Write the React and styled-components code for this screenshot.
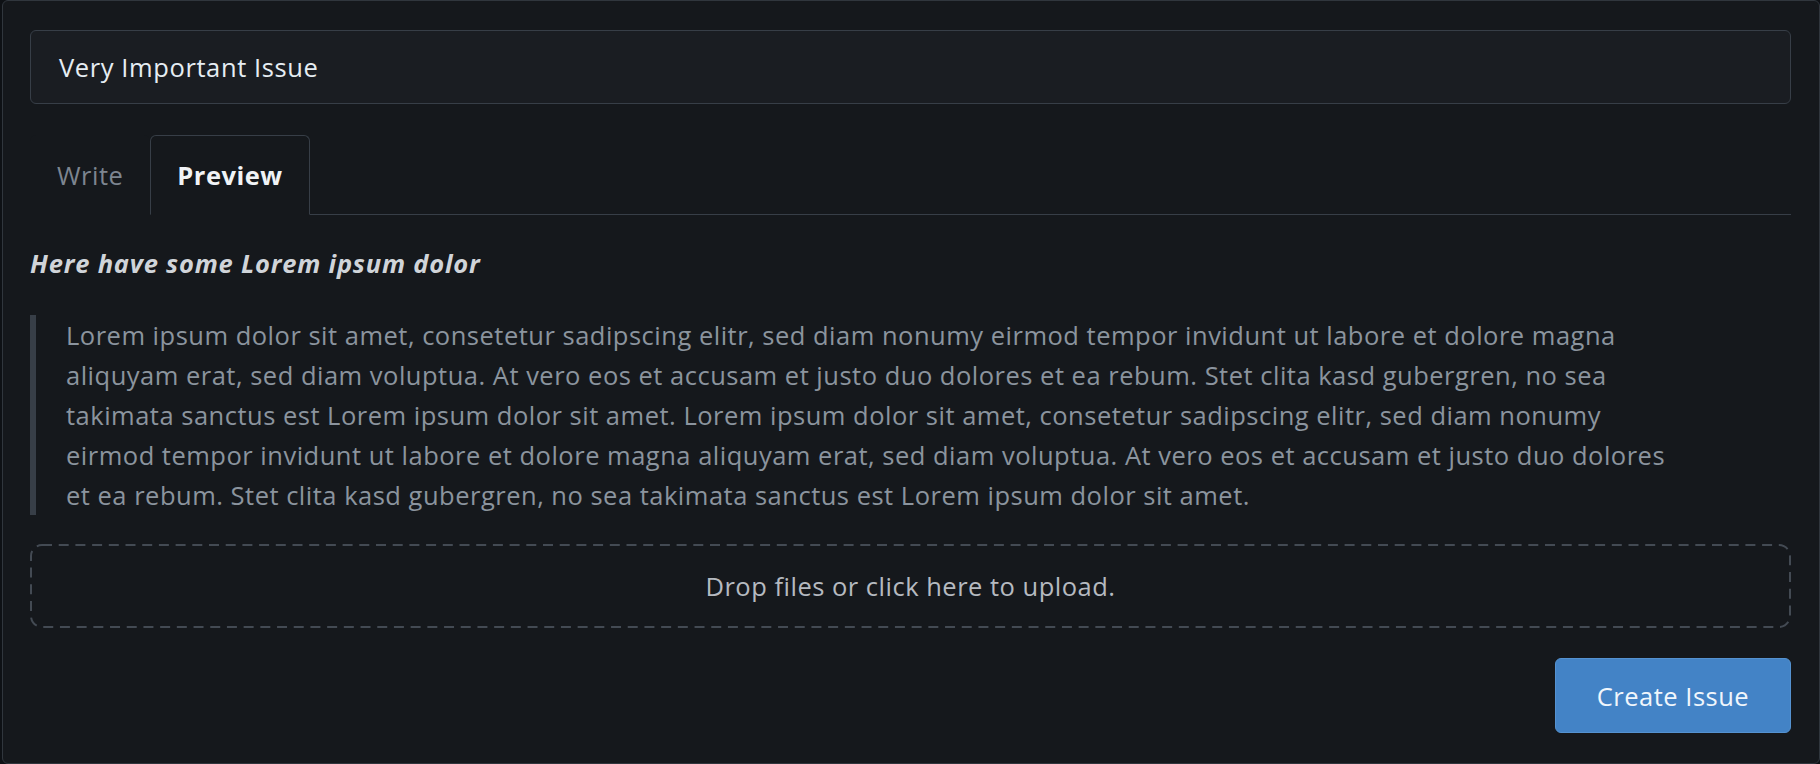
import styled, { createGlobalStyle } from "styled-components";

const Global = createGlobalStyle`
  html, body {
    margin: 0;
    padding: 0;
    background: #0e1115;
  }
  * { box-sizing: border-box; }
`;

const FONT = `"Open Sans", "Noto Sans", sans-serif`;

const Panel = styled.div`
  width: 1818px;
  height: 764px;
  margin-left: 2px;
  display: flex;
  flex-direction: column;
  background: #15181c;
  border: 1px solid #30363d;
  border-radius: 6px;
  padding: 29px 28px 0 27px;
  font-family: ${FONT};
  font-size: 25.5px;
  letter-spacing: 0.5px;
`;

const TitleInput = styled.div`
  height: 74px;
  display: flex;
  align-items: center;
  padding: 0 28px;
  background: #1a1d22;
  border: 1px solid #373e47;
  border-radius: 6px;
  color: #e6edf3;
  letter-spacing: 0.6px;
`;

const TabBar = styled.div`
  display: flex;
  margin-top: 31px;
  border-bottom: 1px solid #373e47;
`;

const Tab = styled.div`
  height: 80px;
  display: flex;
  align-items: center;
  padding: 0 26px;
  margin-bottom: -1px;
  color: ${(p) => (p.$active ? "#f0f3f6" : "#7d8590")};
  font-weight: ${(p) => (p.$active ? 700 : 400)};
  background: #15181c;
  border: 1px solid ${(p) => (p.$active ? "#373e47" : "transparent")};
  border-bottom-color: ${(p) => (p.$active ? "#15181c" : "transparent")};
  border-radius: 6px 6px 0 0;
`;

const Heading = styled.div`
  margin-top: 28px;
  line-height: 40px;
  font-size: 25.5px;
  font-weight: 700;
  font-style: italic;
  letter-spacing: 0.8px;
  color: #d0d4d9;
`;

const Quote = styled.blockquote`
  margin: 32px 0 0 0;
  padding: 0 0 0 30px;
  border-left: 6px solid #373e47;
`;

const QuoteText = styled.p`
  margin: 0;
  max-width: 1630px;
  line-height: 40px;
  color: #8b949e;
`;

const DropZone = styled.div`
  position: relative;
  height: 84px;
  margin-top: 29px;
  display: flex;
  align-items: center;
  justify-content: center;
  color: #b5bac0;
`;

const DashFrame = styled.svg`
  position: absolute;
  inset: 0;
  width: 100%;
  height: 100%;
  overflow: visible;
  pointer-events: none;
`;

const Footer = styled.div`
  display: flex;
  justify-content: flex-end;
  margin-top: 30px;
`;

const Button = styled.button`
  width: 236px;
  height: 75px;
  background: #4383c6;
  border: 1px solid #5592d0;
  border-radius: 6px;
  color: #f0f6fc;
  font-family: ${FONT};
  font-size: 25.5px;
  letter-spacing: 0.5px;
  cursor: pointer;
`;

export default function App() {
  return (
    <>
      <Global />
      <Panel>
        <TitleInput>Very Important Issue</TitleInput>
        <TabBar>
          <Tab>Write</Tab>
          <Tab $active>Preview</Tab>
        </TabBar>
        <Heading>Here have some Lorem ipsum dolor</Heading>
        <Quote>
          <QuoteText>
            Lorem ipsum dolor sit amet, consetetur sadipscing elitr, sed diam nonumy eirmod tempor invidunt ut
            labore et dolore magna aliquyam erat, sed diam voluptua. At vero eos et accusam et justo duo dolores et
            ea rebum. Stet clita kasd gubergren, no sea takimata sanctus est Lorem ipsum dolor sit amet. Lorem ipsum
            dolor sit amet, consetetur sadipscing elitr, sed diam nonumy eirmod tempor invidunt ut labore et dolore
            magna aliquyam erat, sed diam voluptua. At vero eos et accusam et justo duo dolores et ea rebum. Stet
            clita kasd gubergren, no sea takimata sanctus est Lorem ipsum dolor sit amet.
          </QuoteText>
        </Quote>
        <DropZone>
          <DashFrame>
            <rect
              x="1"
              y="1"
              rx="11"
              ry="11"
              style={{ width: "calc(100% - 2px)", height: "calc(100% - 2px)" }}
              fill="none"
              stroke="#434a53"
              strokeWidth="2"
              strokeDasharray="10 6.7"
            />
          </DashFrame>
          Drop files or click here to upload.
        </DropZone>
        <Footer>
          <Button>Create Issue</Button>
        </Footer>
      </Panel>
    </>
  );
}
